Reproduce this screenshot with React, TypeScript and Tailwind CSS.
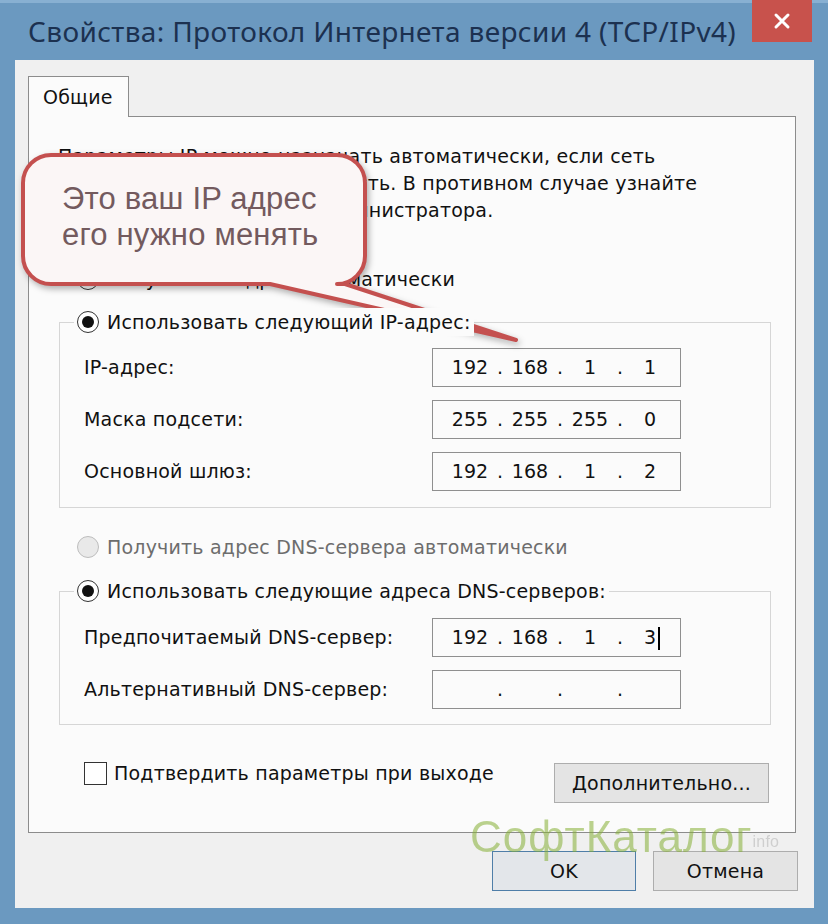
import { ReactNode } from "react";

function Radio({ checked, disabled }: { checked?: boolean; disabled?: boolean }) {
  return (
    <span
      className={
        "flex h-[22px] w-[22px] shrink-0 items-center justify-center rounded-full border-[1.5px] " +
        (disabled ? "border-[#bdbdbd] bg-[#e9e9e9]" : "border-[#333] bg-white")
      }
    >
      {checked && <span className="h-[12px] w-[12px] rounded-full bg-[#111]" />}
    </span>
  );
}

function IpField({ parts, cursor }: { parts: string[]; cursor?: boolean }) {
  return (
    <div className="flex h-[39px] w-[249px] items-center border border-[#8f8f8f] bg-[#fbfbfb] pl-[12px] tracking-normal">
      {parts.map((p, i) => (
        <div key={i} className="flex items-center">
          <span className="w-[50px] text-center">
            {cursor && i === 3 ? (
              <span className="relative">
                {p}
                <span className="absolute -right-[4px] top-[1px] h-[23px] w-[2px] bg-black" />
              </span>
            ) : (
              p
            )}
          </span>
          {i < 3 && <span className="w-[10px] text-center">.</span>}
        </div>
      ))}
    </div>
  );
}

function FieldRow({ label, children }: { label: string; children: ReactNode }) {
  return (
    <div className="flex h-[39px] items-center">
      <span className="w-[348px]">{label}</span>
      {children}
    </div>
  );
}

function GroupBox({
  caption,
  height,
  children,
}: {
  caption: string;
  height: string;
  children: ReactNode;
}) {
  return (
    <div className="ml-[30px] w-[712px]">
      <div className="relative z-10 flex h-[26px] items-center pl-[15px]">
        <span className="flex items-center gap-[8px] bg-[#fbfbfb] px-[3px]">
          <Radio checked />
          <span>{caption}</span>
        </span>
      </div>
      <div className={"-mt-[13px] flex flex-col gap-[13px] border border-[#d6d6d6] pl-[24px] " + height}>
        {children}
      </div>
    </div>
  );
}

export default function App() {
  return (
    <div className="relative flex h-[924px] w-[828px] flex-col overflow-hidden bg-[#6b99c0] font-['DejaVu_Sans',sans-serif] text-[19px] tracking-[0.2px] text-[#111]">
      {/* title bar */}
      <div className="flex h-[60px] shrink-0 items-start justify-between border-t-[3px] border-[#88b0d2]">
        <div className="pl-[28px] pt-[7px] font-['Noto_Sans',sans-serif] text-[28px] tracking-[0.35px] text-[#1c3150]">
          Свойства: Протокол Интернета версии 4 (TCP/IPv4)
        </div>
        <div className="-mt-[3px] mr-[16px] flex h-[42px] w-[60px] items-center justify-center bg-[#c8524c]">
          <svg width="18" height="18" viewBox="0 0 18 18">
            <path d="M3 3 L15 15 M15 3 L3 15" stroke="white" strokeWidth="3" strokeLinecap="round" />
          </svg>
        </div>
      </div>

      {/* client area */}
      <div className="relative ml-[15px] mr-[14px] flex h-[848px] flex-col bg-[#f0f0f0] pl-[13px] pt-[16px]">
        {/* tab header */}
        <div className="relative z-10 -mb-[1px] flex h-[41px] w-[101px] items-center border border-b-0 border-[#8c8c8c] bg-[#fbfbfb] pl-[14px]">
          Общие
        </div>

        {/* tab panel */}
        <div className="flex h-[717px] w-[768px] flex-col border border-[#8c8c8c] bg-[#fbfbfb]">
          <div className="ml-[29px] mt-[26px] leading-[27px]">
            <div>Параметры IP можно назначать автоматически, если сеть</div>
            <div>поддерживает эту возможность. В противном случае узнайте</div>
            <div>параметры IP у сетевого администратора.</div>
          </div>

          <div className="ml-[48px] mt-[42px] flex h-[26px] items-center gap-[8px]">
            <Radio />
            <span>Получить IP-адрес автоматически</span>
          </div>

          <div className="mt-[17px]">
            <GroupBox caption="Использовать следующий IP-адрес:" height="h-[186px] pt-[25px]">
              <FieldRow label="IP-адрес:">
                <IpField parts={["192", "168", "1", "1"]} />
              </FieldRow>
              <FieldRow label="Маска подсети:">
                <IpField parts={["255", "255", "255", "0"]} />
              </FieldRow>
              <FieldRow label="Основной шлюз:">
                <IpField parts={["192", "168", "1", "2"]} />
              </FieldRow>
            </GroupBox>
          </div>

          <div className="ml-[48px] mt-[26px] flex h-[26px] items-center gap-[8px] text-[#6d6d6d]">
            <Radio disabled />
            <span>Получить адрес DNS-сервера автоматически</span>
          </div>

          <div className="mt-[18px]">
            <GroupBox caption="Использовать следующие адреса DNS-серверов:" height="h-[134px] pt-[26px]">
              <FieldRow label="Предпочитаемый DNS-сервер:">
                <IpField parts={["192", "168", "1", "3"]} cursor />
              </FieldRow>
              <FieldRow label="Альтернативный DNS-сервер:">
                <IpField parts={["", "", "", ""]} />
              </FieldRow>
            </GroupBox>
          </div>

          <div className="mt-[36px] flex items-start pl-[55px] pr-[26px]">
            <div className="flex h-[24px] items-center gap-[7px]">
              <span className="h-[23px] w-[23px] border border-[#333] bg-white" />
              <span>Подтвердить параметры при выходе</span>
            </div>
            <button className="ml-auto mt-[2px] flex h-[40px] w-[215px] items-center justify-center border border-[#adadad] bg-[#e4e4e4]">
              Дополнительно...
            </button>
          </div>
        </div>

        {/* dialog buttons */}
        <div className="mt-[18px] flex justify-end gap-[17px] pr-[16px]">
          <button className="flex h-[40px] w-[144px] items-center justify-center border border-[#4f7ea8] bg-[#e3e6ea]">
            OK
          </button>
          <button className="flex h-[40px] w-[145px] items-center justify-center border border-[#adadad] bg-[#e4e4e4]">
            Отмена
          </button>
        </div>

        {/* watermark */}
        <div className="pointer-events-none absolute left-[455px] top-[752px] flex items-end font-['Liberation_Sans',sans-serif] opacity-55">
          <span className="text-[44px] leading-[50px] tracking-[1px] text-[#86b035]">СофтКаталог</span>
          <span className="mb-[8px] text-[16px] text-[#b5b5b5]">info</span>
        </div>
      </div>

      {/* callout */}
      <svg className="pointer-events-none absolute left-0 top-0" width="828" height="924">
        <path
          d="M51 155 H337 A28 28 0 0 1 365 183 V256 A28 28 0 0 1 337 284 H345 L516 340 L270 284 H51 A28 28 0 0 1 23 256 V183 A28 28 0 0 1 51 155 Z"
          fill="#fbf6f6"
          stroke="#c4504f"
          strokeWidth="4"
          strokeLinejoin="round"
          style={{ filter: "drop-shadow(2px 3px 3px rgba(0,0,0,0.3))" }}
        />
      </svg>
      <div className="pointer-events-none absolute left-[62px] top-[181px] font-['Liberation_Sans',sans-serif] text-[31px] leading-[36px] text-[#735a5e]">
        <div>Это ваш IP адрес</div>
        <div>его нужно менять</div>
      </div>
    </div>
  );
}
